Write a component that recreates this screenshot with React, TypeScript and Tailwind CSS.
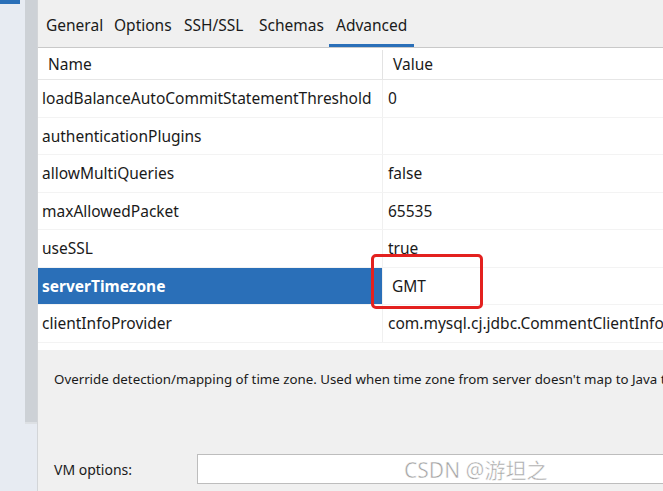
import React from 'react';

const rows: { name: string; value: string; selected?: boolean }[] = [
  { name: 'loadBalanceAutoCommitStatementThreshold', value: '0' },
  { name: 'authenticationPlugins', value: '' },
  { name: 'allowMultiQueries', value: 'false' },
  { name: 'maxAllowedPacket', value: '65535' },
  { name: 'useSSL', value: 'true' },
  { name: 'serverTimezone', value: 'GMT', selected: true },
  { name: 'clientInfoProvider', value: 'com.mysql.cj.jdbc.CommentClientInfoProvider' },
];

// tab label + its box width, so the labels land where the reference has them
const tabs: { label: string; w: string }[] = [
  { label: 'General', w: 'w-[68px]' },
  { label: 'Options', w: 'w-[70px]' },
  { label: 'SSH/SSL', w: 'w-[75px]' },
  { label: 'Schemas', w: 'w-[77px]' },
  { label: 'Advanced', w: 'w-[85px]' },
];

export default function App() {
  return (
    <div
      className="relative w-[663px] h-[491px] flex overflow-hidden bg-[#f0f0f0] text-[15.5px] text-[#1a1a1a]"
      style={{ fontFamily: '"Noto Sans", "Noto Sans CJK SC", sans-serif' }}
    >
      {/* Left strip */}
      <div className="w-[25px] bg-[#e7ebf2] shrink-0">
        <div className="w-[20px] h-[4px] bg-[#2a6fb8]" />
      </div>
      {/* Scrollbar */}
      <div className="w-[12px] bg-[#e7ebf2] shrink-0">
        <div className="h-[424px] bg-[#cdd1d6] border-b-2 border-[#dde0e4]" />
      </div>
      <div className="w-px bg-[#d3d5d8] shrink-0" />

      {/* Main panel */}
      <div className="flex-1 flex flex-col min-w-0">
        {/* Tabs */}
        <div className="h-[47px] flex items-end pl-[1px] shrink-0">
          {tabs.map((t) => (
            <div
              key={t.label}
              className={`${t.w} h-[47px] flex items-center pt-[8px] whitespace-nowrap border-b-[3px] ${
                t.label === 'Advanced' ? 'pl-[7px] border-[#2a6fb8]' : 'pl-[7px] border-transparent'
              }`}
            >
              {t.label}
            </div>
          ))}
        </div>

        {/* Table */}
        <div className="h-[303px] bg-white border-t border-[#c9c9c9] flex flex-col shrink-0">
          <div className="h-[32px] flex border-b border-[#e6e6e6] shrink-0 pt-[2px]">
            <div className="w-[345px] pl-[10px] flex items-center border-r border-[#e3e3e3]">Name</div>
            <div className="flex-1 pl-[10px] flex items-center">Value</div>
          </div>
          {rows.map((r) => (
            <div key={r.name} className="h-[37.5px] flex border-b border-[#f3f3f3] shrink-0">
              <div
                className={`w-[345px] pl-[4px] pt-[1px] flex items-center whitespace-nowrap border-r border-[#f0f0f0] ${
                  r.selected ? 'bg-[#2a6fb8] text-white font-bold' : ''
                }`}
              >
                {r.name}
              </div>
              <div
                className={`flex-1 flex items-center pt-[1px] whitespace-nowrap overflow-hidden ${
                  r.selected ? 'pl-[9px]' : 'pl-[5px]'
                }`}
              >
                {r.value}
              </div>
            </div>
          ))}
        </div>

        {/* Description */}
        <div className="pl-[16px] pt-[20px] h-[104px] whitespace-nowrap overflow-hidden text-[13.3px]">
          Override detection/mapping of time zone. Used when time zone from server doesn't map to Java time zone
        </div>

        {/* VM options */}
        <div className="flex items-center h-[30px]">
          <div className="w-[159px] pl-[16px] text-[14px]">VM options:</div>
          <div className="flex-1 h-[30px] bg-white border border-[#bdbdbd] border-r-0" />
        </div>
      </div>

      {/* Red annotation box */}
      <div className="absolute left-[371px] top-[254px] w-[112px] h-[55px] border-[3px] border-[#e3211f] rounded-[5px]" />

      {/* Watermark */}
      <div
        className="absolute left-[404px] top-[455px] text-[21px] text-[#a3a3a3] whitespace-nowrap"
        style={{ WebkitTextStroke: '0.5px #ffffff' }}
      >
        CSDN @游坦之
      </div>
    </div>
  );
}
